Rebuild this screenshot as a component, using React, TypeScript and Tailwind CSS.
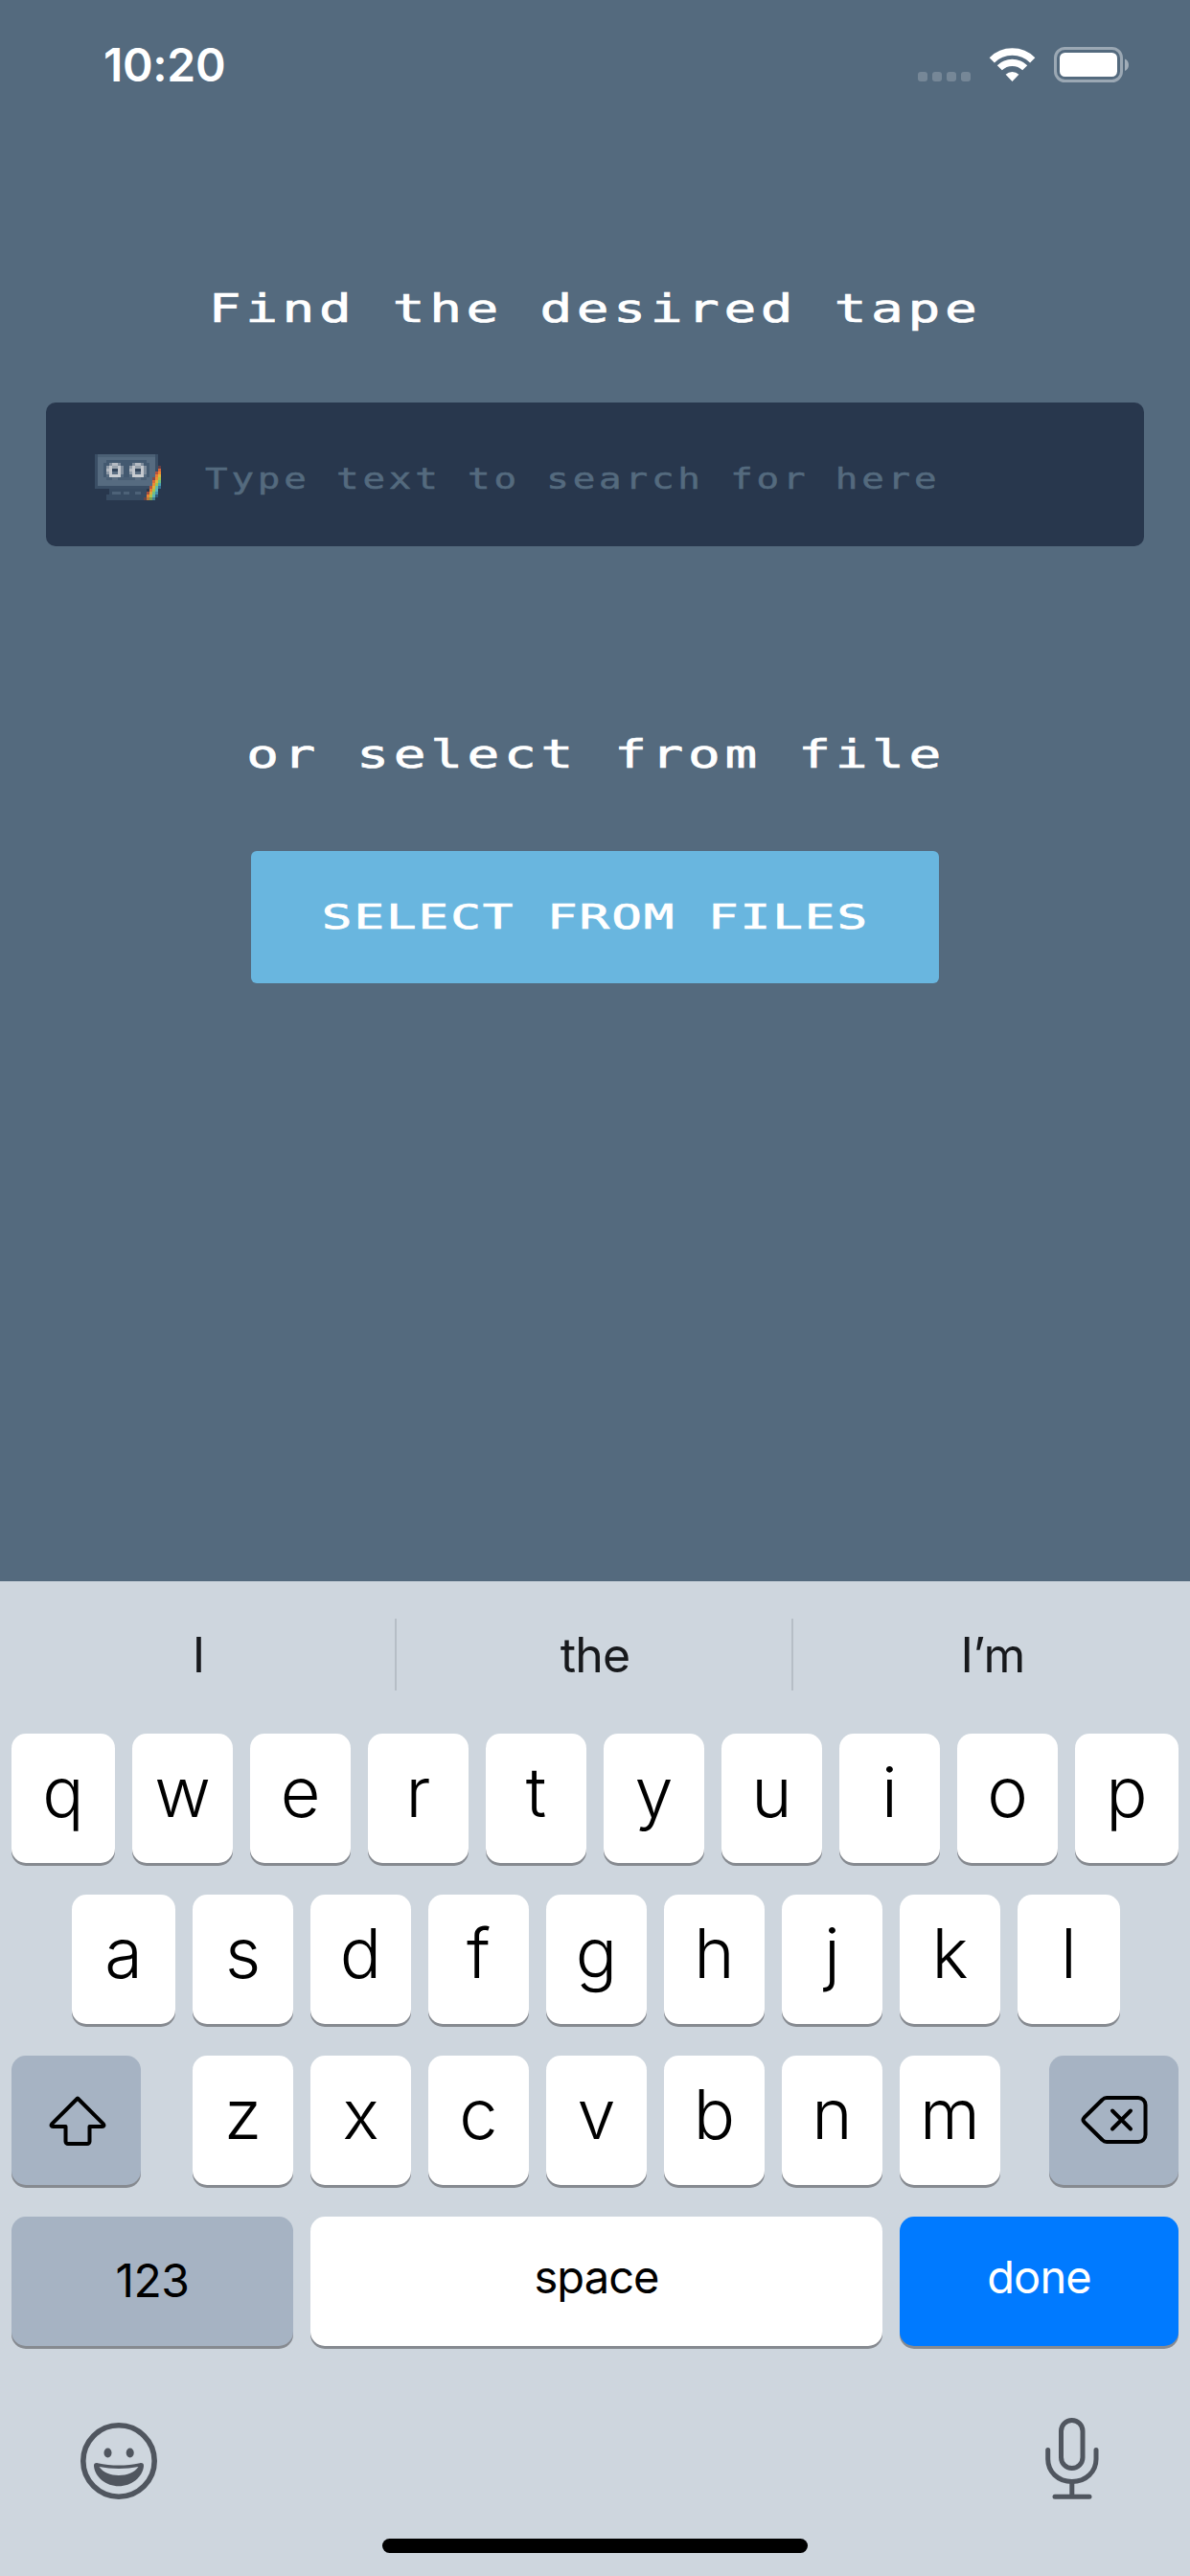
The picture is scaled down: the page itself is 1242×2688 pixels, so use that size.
import React from "react";

const INTER = "font-['Inter',sans-serif]";
const MONO = "font-['DejaVu_Sans_Mono',monospace]";

type Cell = [x: number, y: number, w: number, h: number, fill: string];

const REEL: Cell[] = [
  [1, 0, 4, 1, "#7e8c9b"],
  [2, 0, 2, 1, "#b4bac2"],
  [0, 1, 1, 3, "#8f9ba8"],
  [0, 2, 1, 1, "#b4bac2"],
  [5, 1, 1, 3, "#7e8c9b"],
  [1, 1, 4, 3, "#c3c7cd"],
  [1, 4, 4, 1, "#c9cdd2"],
  [0, 4, 1, 1, "#566b80"],
  [5, 4, 1, 1, "#566b80"],
  [2, 5, 2, 1, "#5b6e82"],
  [2, 1, 2, 1, "#9aa4ae"],
  [2, 2, 2, 1, "#33455b"],
  [2, 3, 2, 1, "#5b6e82"],
];

const TAPE: Cell[] = [
  [0, 0, 22, 12, "#3a4e65"],
  [1, 0, 20, 1, "#4b6075"],
  [1, 1, 20, 10, "#566b80"],
  [4, 2, 14, 1, "#435970"],
  [3, 3, 16, 5, "#435970"],
  [4, 8, 14, 1, "#4a5f75"],
  [5, 12, 13, 2, "#374b62"],
  [4, 14, 14, 2, "#374b62"],
  [6, 13, 3, 1, "#4d6278"],
  [10, 13, 2, 1, "#4d6278"],
  [14, 13, 2, 1, "#4d6278"],
];

const STRIPES: Cell[] = [
  [22, 4, 1, 1, "#643e46"], [22, 5, 1, 1, "#d9673a"], [21, 6, 1, 1, "#b5533f"], [22, 6, 1, 1, "#f0862f"],
  [21, 7, 1, 1, "#e87b35"], [22, 7, 1, 1, "#d9b63f"], [20, 8, 1, 1, "#8b4a45"], [21, 8, 1, 1, "#f08c32"],
  [22, 8, 1, 1, "#a6c24e"], [20, 9, 1, 1, "#dd6b38"], [21, 9, 1, 1, "#dcb53e"], [22, 9, 1, 1, "#6fbf80"],
  [20, 10, 1, 1, "#ee8933"], [21, 10, 1, 1, "#9fc150"], [22, 10, 1, 1, "#4ba3b4"], [19, 11, 1, 1, "#b7543e"],
  [20, 11, 1, 1, "#dfae3b"], [21, 11, 1, 1, "#66bda0"], [22, 11, 1, 1, "#376f93"], [19, 12, 1, 1, "#e87d35"],
  [20, 12, 1, 1, "#a9c24c"], [21, 12, 1, 1, "#5ab2be"], [18, 13, 1, 1, "#a44e3f"], [19, 13, 1, 1, "#e0aa3b"],
  [20, 13, 1, 1, "#72bf85"], [21, 13, 1, 1, "#4590b0"], [18, 14, 1, 1, "#ec8334"], [19, 14, 1, 1, "#b0c24b"],
  [20, 14, 1, 1, "#5cb5b4"], [21, 14, 1, 1, "#33597a"], [17, 15, 1, 1, "#6b4446"], [18, 15, 1, 1, "#b97c3b"],
  [19, 15, 1, 1, "#769d58"], [20, 15, 1, 1, "#447e90"],
];

function Cells({ cells }: { cells: Cell[] }) {
  return (
    <>
      {cells.map(([x, y, w, h, fill], i) => (
        <rect key={i} x={x} y={y} width={w} height={h} fill={fill} />
      ))}
    </>
  );
}

function TapeIcon() {
  return (
    <svg className="mt-[6px] h-12 w-[69px] shrink-0" viewBox="0 0 23 16" shapeRendering="crispEdges">
      <Cells cells={TAPE} />
      <g transform="translate(4 3)"><Cells cells={REEL} /></g>
      <g transform="translate(12 3)"><Cells cells={REEL} /></g>
      <Cells cells={STRIPES} />
    </svg>
  );
}

function StatusBar() {
  return (
    <header className="flex h-[134px] items-start justify-between pr-[62px] pl-[108px]">
      <div className={`${INTER} mt-[38px] text-[48px] leading-[60px] font-semibold tracking-[-0.3px]`}>10:20</div>
      <div className="mt-[49px] flex h-[37px] items-start">
        <div className="mt-[26px] flex gap-[5px]">
          {[0, 1, 2, 3].map((i) => (
            <span key={i} className="size-[10px] rounded-[3px] bg-white/20" />
          ))}
        </div>
        <svg className="ml-[19px] h-[37px] w-[49px]" viewBox="0 0 49 37" fill="none" stroke="white">
          <path d="M3.3 13.8a30 30 0 0 1 42.4 0" strokeWidth="7.4" />
          <path d="M11.3 21.8a18.7 18.7 0 0 1 26.4 0" strokeWidth="7.2" />
          <path d="M24.5 36 17.6 28.8a10 10 0 0 1 13.8 0z" fill="white" stroke="none" />
        </svg>
        <svg className="ml-[19px] h-[37px] w-[80px]" viewBox="0 0 80 37" fill="none">
          <rect x="1.5" y="1.5" width="69" height="34" rx="10" stroke="white" strokeOpacity=".42" strokeWidth="3" />
          <rect x="6" y="6" width="60" height="25" rx="5.5" fill="white" />
          <path d="M74 12.5c5.300 2 5.300 10.500 0 12.500z" fill="white" fillOpacity=".45" />
        </svg>
      </div>
    </header>
  );
}

function Key({ className = "", children }: { className?: string; children: React.ReactNode }) {
  return (
    <button
      type="button"
      className={`flex h-[135px] shrink-0 items-center justify-center rounded-[15px] shadow-[0_3px_0_#868a90] ${className}`}
    >
      {children}
    </button>
  );
}

function Letters({ letters, first, last }: { letters: string; first?: string; last?: string }) {
  return (
    <>
      {letters.split("").map((c, i) => (
        <Key
          key={c}
          className={`bg-white pb-[13px] text-[72px] leading-none font-[350] ${
            i === 0 && first ? first : i === letters.length - 1 && last ? last : "w-[105px]"
          }`}
        >
          {c}
        </Key>
      ))}
    </>
  );
}

function Keyboard() {
  return (
    <section className={`${INTER} flex h-[1038px] flex-col bg-[#ced6de] text-black`}>
      <div className="grid h-[159px] grid-cols-3 text-[50px] leading-[60px] text-[#17191c]">
        {["I", "the", "I’m"].map((word, i) => (
          <div key={word} className="flex items-start">
            <span className="mt-[47px] flex-1 pl-[2px] text-center tracking-[-0.8px]">{word}</span>
            {i < 2 && <span className="mt-[39px] h-[75px] w-[2px] bg-[#b6bec6]" />}
          </div>
        ))}
      </div>

      <div className="flex flex-col gap-[33px] px-3">
        <div className="flex gap-[18px]">
          <Letters letters="qwertyuiop" first="w-[108px]" last="w-[108px]" />
        </div>
        <div className="flex gap-[18px] pl-[63px]">
          <Letters letters="asdfghjkl" first="w-[108px]" last="w-[107px]" />
        </div>
        <div className="flex justify-between">
          <Key className="w-[135px] bg-[#a6b3c3] pl-[3px]">
            <svg className="h-[54px] w-[60px]" viewBox="0 0 60 54" fill="none" stroke="black" strokeWidth="4" strokeLinejoin="round">
              <path d="M30 3.500 3.300 30.200c-1.400 1.500-.6 2.800 1 2.800H17.500v15.500a2.500 2.500 0 0 0 2.500 2.500h20a2.500 2.500 0 0 0 2.500-2.500V33h13.200c1.600 0 2.400-1.300 1-2.800z" />
            </svg>
          </Key>
          <div className="ml-[3px] flex gap-[18px]">
            <Letters letters="zxcvbnm" />
          </div>
          <Key className="w-[135px] bg-[#a6b3c3] pb-px pl-px">
            <svg className="h-[52px] w-[70px]" viewBox="0 0 70 52" fill="none" stroke="black" strokeWidth="4" strokeLinecap="round" strokeLinejoin="round">
              <path d="M27 3H60a7.500 7.500 0 0 1 7.500 7.500V41.500A7.500 7.500 0 0 1 60 49H27c-2 0-3.200-.6-4.500-2L3.700 28.500c-1.600-1.700-1.600-3.300 0-5L22.500 5C23.800 3.600 25 3 27 3Z" />
              <path d="m33 16.500 19 19m0-19-19 19" />
            </svg>
          </Key>
        </div>
        <div className="flex gap-[18px] text-[47px] leading-none tracking-[-0.9px]">
          <Key className="w-[294px] bg-[#a6b3c3] pb-[2px] text-[48px] tracking-[-0.4px]">123</Key>
          <Key className="w-[597px] bg-white pb-[10px]">space</Key>
          <Key className="w-[291px] bg-[#007aff] pb-[10px] text-white">done</Key>
        </div>
      </div>

      <div className="mt-[66px] flex justify-between pr-[94px] pl-[84px]">
        <svg className="mt-[14px] size-20" viewBox="0 0 80 80" fill="#50565f">
          <circle cx="40" cy="40" r="37.200" fill="none" stroke="#50565f" strokeWidth="5.600" />
          <ellipse cx="28.500" cy="31.500" rx="4" ry="5" />
          <ellipse cx="51.700" cy="31.500" rx="4" ry="5" />
          <path
            fillRule="evenodd"
            d="M18 42.200c14 3.200 30 3.200 44 0 2.600-.6 4.200.8 4 3C65 57 53 66.200 40 66.200S15 57 14 45.200c-.2-2.200 1.400-3.600 4-3ZM19.500 46c4 6 12 9 20.500 9s16.500-3 20.500-9c-13 2.600-28 2.600-41 0Z"
          />
        </svg>
        <svg className="mt-[8px] h-[86px] w-[58px]" viewBox="0 0 58 86" fill="none" stroke="#50565f" strokeWidth="5" strokeLinecap="round">
          <rect x="17.500" y="3.500" width="22.500" height="50" rx="11.250" />
          <path d="M3.700 34.500v9.500C3.700 57 14 67.500 28.800 67.500S54 57 54 44v-9.500" />
          <path d="M28.800 68v14M11 83.200h36" />
        </svg>
      </div>

      <div className="mt-auto mb-6 h-[15px] w-[444px] self-center rounded-full bg-black" />
    </section>
  );
}

export default function App() {
  return (
    <div className="flex h-[2688px] w-[1242px] flex-col overflow-hidden bg-[#546a7e] text-white">
      <StatusBar />
      <main className={`${MONO} flex flex-1 flex-col items-center`}>
        <h1 className="mt-[158px] h-[60px] scale-x-[1.4] text-[40px] leading-[60px] tracking-[3.35px] whitespace-pre [-webkit-text-stroke:0.7px_white]">
          Find the desired tape
        </h1>
        <label className="mt-[68px] flex h-[150px] w-[1146px] items-center rounded-[10px] bg-[#28374d] pl-[51px]">
          <TapeIcon />
          <span className="mt-[9px] ml-[46px] origin-left scale-x-[1.305] text-[30px] leading-[40px] tracking-[2.94px] whitespace-pre text-[#546a7e] [-webkit-text-stroke:0.5px_#546a7e]">
            Type text to search for here
          </span>
        </label>
        <h2 className="mt-[187px] h-[60px] scale-x-[1.4] pl-[2px] text-[40px] leading-[60px] tracking-[3.35px] whitespace-pre [-webkit-text-stroke:0.7px_white]">
          or select from file
        </h2>
        <button
          type="button"
          className="mt-[71px] flex h-[138px] w-[718px] items-center justify-center rounded-[6px] bg-[#69b6df]"
        >
          <span className="scale-x-[1.5] text-[35px] leading-[50px] tracking-[1.33px] whitespace-pre [-webkit-text-stroke:0.7px_white]">
            SELECT FROM FILES
          </span>
        </button>
      </main>
      <Keyboard />
    </div>
  );
}
